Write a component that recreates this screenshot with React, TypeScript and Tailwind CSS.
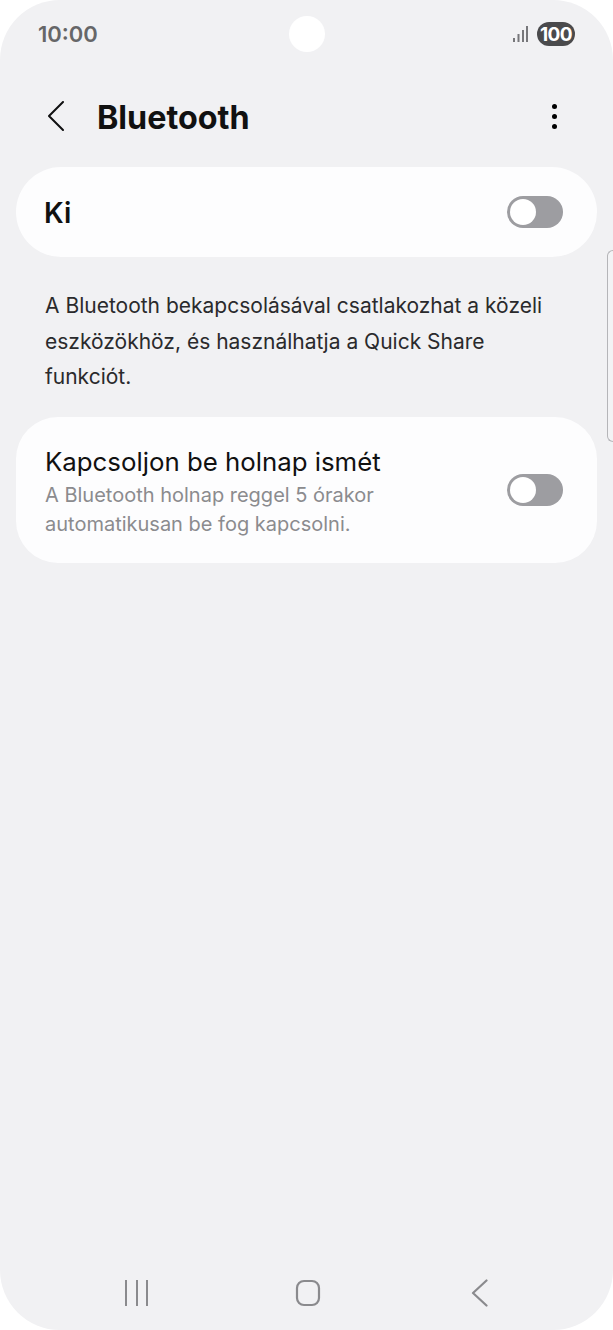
const FONT = "font-['Inter',sans-serif]";

function Toggle() {
  return (
    <div className="flex h-[32px] w-[56px] shrink-0 items-center rounded-full bg-[#9d9da1] pl-[3px]">
      <div className="h-[26px] w-[26px] rounded-full bg-white" />
    </div>
  );
}

function StatusBar() {
  return (
    <div className="relative flex h-[68px] items-center justify-between pl-[38px] pr-[38px]">
      <span className="text-[22px] font-semibold leading-none text-[#666668]">10:00</span>
      <div className="absolute left-[289px] top-[16px] h-[36px] w-[36px] rounded-full bg-white" />
      <div className="flex items-center gap-[8px]">
        <svg width="16" height="18" viewBox="0 0 16 18" fill="#77777a">
          <rect x="0" y="13" width="2" height="4" />
          <rect x="4.5" y="9" width="2" height="8" />
          <rect x="9" y="5" width="2" height="12" />
          <rect x="13" y="1" width="2" height="16" />
        </svg>
        <div className="flex h-[24px] w-[38px] items-center justify-center rounded-full bg-[#4a4a4c] text-[19px] font-bold leading-none tracking-[-0.6px] text-white">
          100
        </div>
      </div>
    </div>
  );
}

function Header() {
  return (
    <div className="flex h-[99px] items-center justify-between pl-[48px] pr-[56px]">
      <div className="flex items-center gap-[33px]">
        <svg className="mb-[3px]" width="16" height="30" viewBox="0 0 16 30" fill="none" stroke="#111" strokeWidth="2" strokeLinecap="round" strokeLinejoin="round">
          <path d="M15 1 L1 15 L15 29" />
        </svg>
        <h1 className="pt-[2px] text-[32.3px] font-bold leading-none text-[#111]">Bluetooth</h1>
      </div>
      <div className="flex flex-col gap-[5px] pb-[3px]">
        <div className="h-[5px] w-[5px] rounded-full bg-black" />
        <div className="h-[5px] w-[5px] rounded-full bg-black" />
        <div className="h-[5px] w-[5px] rounded-full bg-black" />
      </div>
    </div>
  );
}

function NavBar() {
  return (
    <div className="mt-auto flex h-[78px] items-start pl-[124px] pt-[27px]">
      <svg width="26" height="28" viewBox="0 0 26 28" fill="#8a8a8d">
        <rect x="1" y="1" width="2" height="26" />
        <rect x="12" y="1" width="2" height="26" />
        <rect x="22" y="1" width="2" height="26" />
      </svg>
      <svg className="ml-[145px]" width="26" height="28" viewBox="0 0 26 28" fill="none" stroke="#8a8a8d" strokeWidth="2.2">
        <rect x="2" y="2" width="22" height="24" rx="7" />
      </svg>
      <svg className="ml-[150px]" width="18" height="28" viewBox="0 0 18 28" fill="none" stroke="#8a8a8d" strokeWidth="2.2" strokeLinecap="round" strokeLinejoin="round">
        <path d="M15.5 1.5 L2 14 L15.5 26.5" />
      </svg>
    </div>
  );
}

export default function App() {
  return (
    <div className={`${FONT} h-[1330px] w-[613px] overflow-hidden bg-white`}>
      <div className="relative flex h-full flex-col rounded-[60px] bg-[#f1f1f3]">
        <StatusBar />
        <Header />

        <div className="mx-[16px] flex h-[90px] items-center justify-between rounded-[45px] bg-[#fdfdfe] pl-[28px] pr-[34px]">
          <span className="pt-[1px] text-[28px] font-semibold leading-none text-[#111]">Ki</span>
          <Toggle />
        </div>

        <p className="mx-[45px] mt-[31px] text-[21px] leading-[35.5px] text-[#2a2a2c]">
          A Bluetooth bekapcsolásával csatlakozhat a közeli eszközökhöz, és használhatja a Quick Share funkciót.
        </p>

        <div className="mx-[16px] mt-[22px] flex h-[146px] items-center justify-between rounded-[42px] bg-[#fdfdfe] pl-[29px] pr-[34px]">
          <div className="flex flex-col pt-[6px]">
            <span className="text-[25.8px] leading-[32px] text-[#111]">Kapcsoljon be holnap ismét</span>
            <span className="mt-[3px] text-[20px] leading-[29px] text-[#8b8b8e]">
              A Bluetooth holnap reggel 5 órakor
              <br />
              automatikusan be fog kapcsolni.
            </span>
          </div>
          <Toggle />
        </div>

        <NavBar />

        {/* scroll handle, sits over the page edge */}
        <div className="absolute right-0 top-[250px] h-[192px] w-[6px] rounded-l-[6px] border border-r-0 border-[#b5b5b8] bg-[#f3f3f5]" />
      </div>
    </div>
  );
}
